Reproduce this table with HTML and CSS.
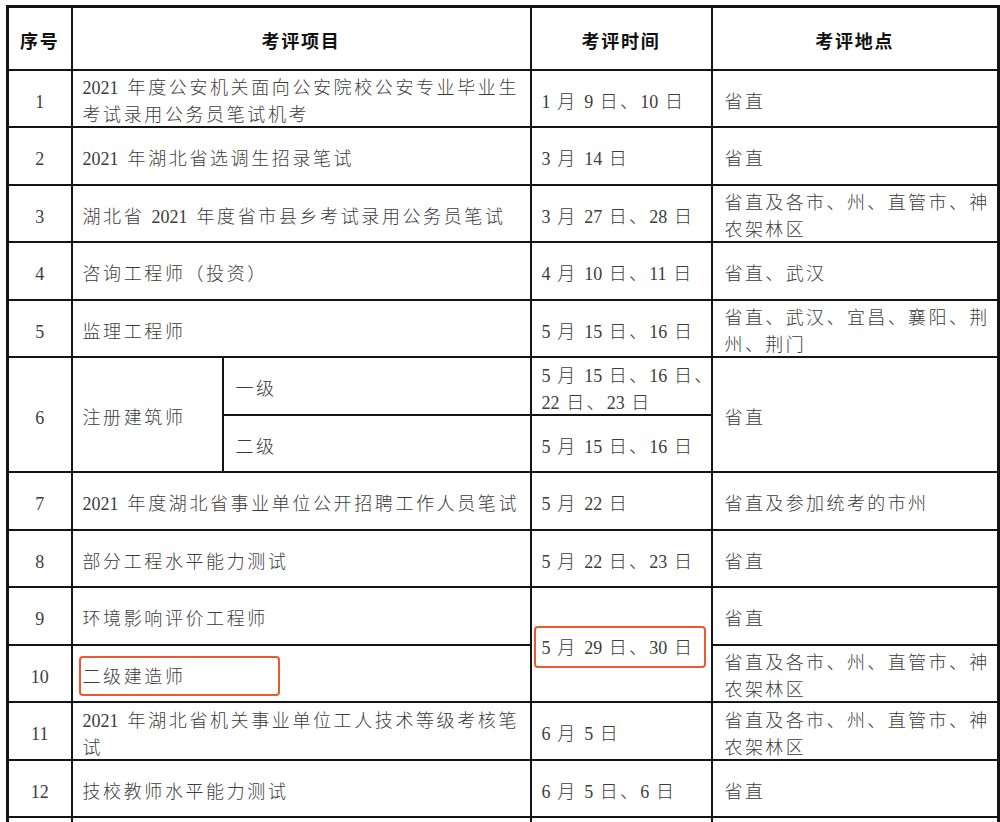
FILE: index.html
```html
<!DOCTYPE html>
<html lang="zh-CN">
<head>
<meta charset="utf-8">
<title>考评安排</title>
<link rel="stylesheet" href="styles.css">
</head>
<body>
<div class="wrap">
  <table class="sheet">
    <colgroup>
      <col class="c-no">
      <col class="c-sub">
      <col class="c-rest">
      <col class="c-time">
      <col class="c-place">
    </colgroup>
    <thead>
      <tr class="head">
        <th>序号</th>
        <th colspan="2">考评项目</th>
        <th>考评时间</th>
        <th>考评地点</th>
      </tr>
    </thead>
    <tbody>
      <tr>
        <td class="no">1</td>
        <td colspan="2"><span class="n">2021</span> 年度公安机关面向公安院校公安专业毕业生<br>考试录用公务员笔试机考</td>
        <td class="time"><span class="n">1</span> 月 <span class="n">9</span> 日、<span class="n">10</span> 日</td>
        <td class="place">省直</td>
      </tr>
      <tr>
        <td class="no">2</td>
        <td colspan="2"><span class="n">2021</span> 年湖北省选调生招录笔试</td>
        <td class="time"><span class="n">3</span> 月 <span class="n">14</span> 日</td>
        <td class="place">省直</td>
      </tr>
      <tr>
        <td class="no">3</td>
        <td colspan="2">湖北省 <span class="n">2021</span> 年度省市县乡考试录用公务员笔试</td>
        <td class="time"><span class="n">3</span> 月 <span class="n">27</span> 日、<span class="n">28</span> 日</td>
        <td class="place">省直及各市、州、直管市、神<br>农架林区</td>
      </tr>
      <tr>
        <td class="no">4</td>
        <td colspan="2">咨询工程师（投资）</td>
        <td class="time"><span class="n">4</span> 月 <span class="n">10</span> 日、<span class="n">11</span> 日</td>
        <td class="place">省直、武汉</td>
      </tr>
      <tr>
        <td class="no">5</td>
        <td colspan="2">监理工程师</td>
        <td class="time"><span class="n">5</span> 月 <span class="n">15</span> 日、<span class="n">16</span> 日</td>
        <td class="place">省直、武汉、宜昌、襄阳、荆<br>州、荆门</td>
      </tr>
      <tr>
        <td class="no" rowspan="2">6</td>
        <td rowspan="2">注册建筑师</td>
        <td class="sub">一级</td>
        <td class="time"><span class="n">5</span> 月 <span class="n">15</span> 日、<span class="n">16</span> 日、<br><span class="n">22</span> 日、<span class="n">23</span> 日</td>
        <td class="place" rowspan="2">省直</td>
      </tr>
      <tr>
        <td class="sub">二级</td>
        <td class="time"><span class="n">5</span> 月 <span class="n">15</span> 日、<span class="n">16</span> 日</td>
      </tr>
      <tr>
        <td class="no">7</td>
        <td colspan="2"><span class="n">2021</span> 年度湖北省事业单位公开招聘工作人员笔试</td>
        <td class="time"><span class="n">5</span> 月 <span class="n">22</span> 日</td>
        <td class="place">省直及参加统考的市州</td>
      </tr>
      <tr>
        <td class="no">8</td>
        <td colspan="2">部分工程水平能力测试</td>
        <td class="time"><span class="n">5</span> 月 <span class="n">22</span> 日、<span class="n">23</span> 日</td>
        <td class="place">省直</td>
      </tr>
      <tr>
        <td class="no">9</td>
        <td colspan="2">环境影响评价工程师</td>
        <td class="time" rowspan="2"><span class="n">5</span> 月 <span class="n">29</span> 日、<span class="n">30</span> 日</td>
        <td class="place">省直</td>
      </tr>
      <tr>
        <td class="no">10</td>
        <td colspan="2">二级建造师</td>
        <td class="place">省直及各市、州、直管市、神<br>农架林区</td>
      </tr>
      <tr>
        <td class="no">11</td>
        <td colspan="2"><span class="n">2021</span> 年湖北省机关事业单位工人技术等级考核笔<br>试</td>
        <td class="time"><span class="n">6</span> 月 <span class="n">5</span> 日</td>
        <td class="place">省直及各市、州、直管市、神<br>农架林区</td>
      </tr>
      <tr>
        <td class="no">12</td>
        <td colspan="2">技校教师水平能力测试</td>
        <td class="time"><span class="n">6</span> 月 <span class="n">5</span> 日、<span class="n">6</span> 日</td>
        <td class="place">省直</td>
      </tr>
      <tr class="tail">
        <td class="no"></td>
        <td colspan="2"></td>
        <td class="time"></td>
        <td class="place"></td>
      </tr>
    </tbody>
  </table>
  <div class="mark mark-name"></div>
  <div class="mark mark-date"></div>
</div>
</body>
</html>
```

FILE: styles.css
```css
html, body {
  margin: 0;
  padding: 0;
  background: #ffffff;
}

body {
  overflow: hidden;
  height: 822px;
}

.wrap {
  position: relative;
  margin: 5px 0 0 6px;
  width: 991px;
}

.sheet {
  border-collapse: collapse;
  table-layout: fixed;
  width: 991px;
  border: 3px solid #141414;
  font-family: "Liberation Serif", "Noto Sans CJK SC", serif;
  font-size: 18px;
  font-weight: 300;
  color: #3c3c3c;
}

.c-no { width: 64px; }
.c-sub { width: 151px; }
.c-rest { width: 308px; }
.c-time { width: 181px; }
.c-place { width: 287px; }

.sheet th,
.sheet td {
  border: 2px solid #141414;
  padding: 4px 0 0 10px;
  vertical-align: middle;
  text-align: left;
  line-height: 27px;
  letter-spacing: 2.6px;
  white-space: nowrap;
}

/* shift the text down without growing the row */
.sheet th::after,
.sheet td::after {
  content: "";
  display: block;
  margin-top: -4px;
}

.sheet tr {
  height: 57.5px;
}

.sheet tr.head {
  height: 63px;
}

.sheet tr.tail {
  height: 40px;
}

.sheet th {
  text-align: center;
  font-weight: 700;
  color: #111111;
  font-size: 18px;
  letter-spacing: 1.8px;
  padding: 4px 0 0 0;
}

.sheet td.no {
  text-align: center;
  padding: 4px 0 0 0;
  letter-spacing: 0;
  font-weight: 400;
}

.sheet td.sub {
  padding-left: 12px;
}

.sheet td.time {
  letter-spacing: 2.2px;
}

.sheet td.place {
  padding-left: 12px;
  letter-spacing: 2.4px;
}

.n {
  letter-spacing: 0;
  font-weight: 400;
  margin-right: 2px;
}

.sheet td.time .n {
  margin-right: 0;
}

.mark {
  position: absolute;
  border: 2px solid #ea5a2e;
  border-radius: 4px;
  box-sizing: border-box;
}

.mark-name {
  left: 73px;
  top: 651px;
  width: 201px;
  height: 40px;
}

.mark-date {
  left: 528px;
  top: 621px;
  width: 172px;
  height: 42px;
}
```
